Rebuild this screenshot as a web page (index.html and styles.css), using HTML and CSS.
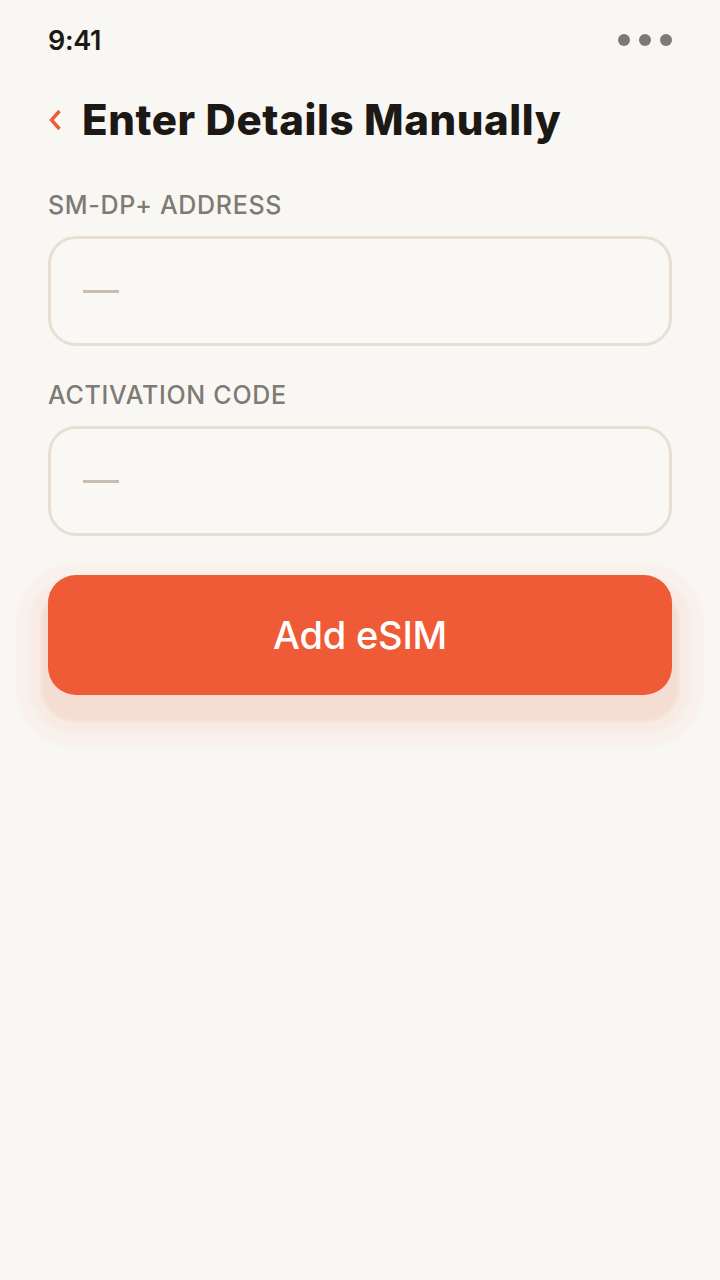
FILE: index.html
```html
<!DOCTYPE html>
<html lang="en">

<head>
    <meta charset="UTF-8">
    <meta name="viewport" content="width=device-width, initial-scale=1.0">
    <title>Enter Details Manually</title>
    <link rel="stylesheet" href="styles.css">
</head>

<body>
    <div class="screen">
        <div class="status-bar">
            <span class="time">9:41</span>
            <div class="dots">
                <span class="dot"></span>
                <span class="dot"></span>
                <span class="dot"></span>
            </div>
        </div>

        <div class="header">
            <button class="back-btn" aria-label="Back">
                <svg width="14" height="22" viewBox="0 0 14 22">
                    <path d="M11.5 2 L3.5 11 L11.5 20" fill="none" stroke="#ef5b36" stroke-width="3.4" stroke-linecap="butt" stroke-linejoin="miter"/>
                </svg>
            </button>
            <h1>Enter Details Manually</h1>
        </div>

        <form class="details-form">
            <label class="field-label" for="smdp">SM-DP+ ADDRESS</label>
            <div class="field" id="smdp">
                <span class="placeholder-dash"></span>
            </div>

            <label class="field-label" for="activation">ACTIVATION CODE</label>
            <div class="field" id="activation">
                <span class="placeholder-dash"></span>
            </div>

            <button type="button" class="add-btn">Add eSIM</button>
        </form>
    </div>
</body>

</html>
```

FILE: styles.css
```css
html,
body {
    margin: 0;
    padding: 0;
    background-color: #f9f7f3;
}

body {
    font-family: Inter, "Noto Sans", sans-serif;
    color: #1c1814;
}

.screen {
    min-height: 1280px;
    box-sizing: border-box;
    padding: 0 48px;
}

.status-bar {
    height: 80px;
    display: flex;
    align-items: center;
    justify-content: space-between;
}

.time {
    font-size: 27px;
    font-weight: 600;
    letter-spacing: -0.3px;
    color: #1c1814;
}

.dots {
    display: flex;
    gap: 9px;
}

.dot {
    width: 12px;
    height: 12px;
    border-radius: 50%;
    background-color: #7d7a75;
}

.header {
    margin-top: 16px;
    height: 48px;
    display: flex;
    align-items: center;
    gap: 20px;
}

.back-btn {
    border: none;
    background: none;
    padding: 0;
    width: 14px;
    height: 22px;
    display: flex;
    cursor: pointer;
}

h1 {
    margin: 0;
    font-size: 42px;
    font-weight: 800;
    letter-spacing: 0.6px;
    line-height: 48px;
    color: #1c1814;
}

.details-form {
    display: flex;
    flex-direction: column;
}

.field-label {
    margin-top: 45px;
    margin-bottom: 15px;
    font-size: 25px;
    line-height: 32px;
    font-weight: 500;
    letter-spacing: 0.7px;
    color: #7f7a74;
}

.field-label + .field + .field-label {
    margin-top: 33px;
}

.field {
    height: 104px;
    border: 3px solid #e7dfd4;
    border-radius: 28px;
    background-color: #faf8f4;
    display: flex;
    align-items: center;
    padding: 0 32px;
}

.placeholder-dash {
    width: 36px;
    height: 3px;
    background-color: #c9bdb1;
}

.add-btn {
    margin-top: 39px;
    height: 120px;
    border: none;
    border-radius: 28px;
    background-color: #ef5b36;
    color: #ffffff;
    font-family: Inter, "Noto Sans", sans-serif;
    font-size: 38px;
    font-weight: 500;
    letter-spacing: -0.2px;
    cursor: pointer;
    box-shadow:
        0 20px 3px 7px rgba(239, 91, 54, 0.09),
        0 20px 4px 18px rgba(239, 91, 54, 0.04),
        0 20px 5px 32px rgba(239, 91, 54, 0.035);
}
```
